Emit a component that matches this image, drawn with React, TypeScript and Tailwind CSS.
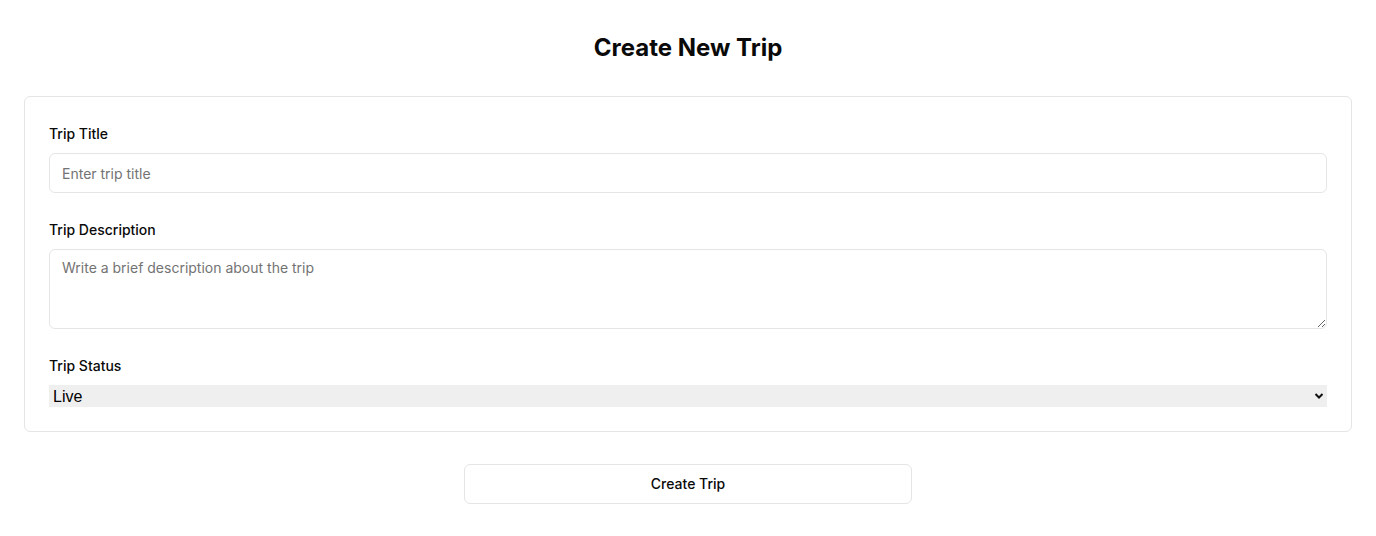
import React from "react";

export default function App() {
  return (
    <div className="min-h-screen bg-white px-6 pt-8 pb-8 text-[#0a0a0a]" style={{ fontFamily: "Inter, 'Noto Sans', sans-serif" }}>
      <h1 className="text-center text-2xl font-bold leading-8 text-[#0a0a0a]">Create New Trip</h1>
      <div className="mt-8 rounded-md border border-[#e5e5e5] bg-white px-6 pt-[27px] pb-6">
        <div className="flex flex-col gap-[27px]">
          <div className="flex flex-col gap-[9px]">
            <label className="text-sm font-medium leading-5">Trip Title</label>
            <input
              className="h-10 w-full rounded-md border border-[#e5e5e5] px-3 text-sm text-[#0a0a0a] placeholder:text-[#737373] outline-none"
              placeholder="Enter trip title"
            />
          </div>
          <div className="flex flex-col gap-[9px]">
            <label className="text-sm font-medium leading-5">Trip Description</label>
            <textarea
              className="h-20 w-full rounded-md border border-[#e5e5e5] px-3 py-2 text-sm text-[#0a0a0a] placeholder:text-[#737373] outline-none"
              placeholder="Write a brief description about the trip"
            />
          </div>
          <div className="flex flex-col gap-[9px]">
            <label className="text-sm font-medium leading-5">Trip Status</label>
            <div className="relative">
              <select
                className="block h-[22px] w-full appearance-none bg-[#efefef] pl-1 pt-px text-base leading-[22px] text-black outline-none"
                style={{ fontFamily: "'Liberation Sans', Arial, sans-serif" }}
                defaultValue="live"
              >
                <option value="live">Live</option>
                <option value="draft">Draft</option>
              </select>
              <svg
                className="pointer-events-none absolute right-[3px] top-[6px]"
                width="10"
                height="10"
                viewBox="0 0 10 10"
              >
                <path d="M1.5 3 L5 6.5 L8.5 3" stroke="#111" strokeWidth="2" fill="none" />
              </svg>
            </div>
          </div>
        </div>
      </div>
      <div className="mt-8 flex justify-center">
        <button className="h-10 w-[448px] rounded-md border border-[#e5e5e5] bg-white text-sm font-medium text-[#0a0a0a]">
          Create Trip
        </button>
      </div>
    </div>
  );
}
